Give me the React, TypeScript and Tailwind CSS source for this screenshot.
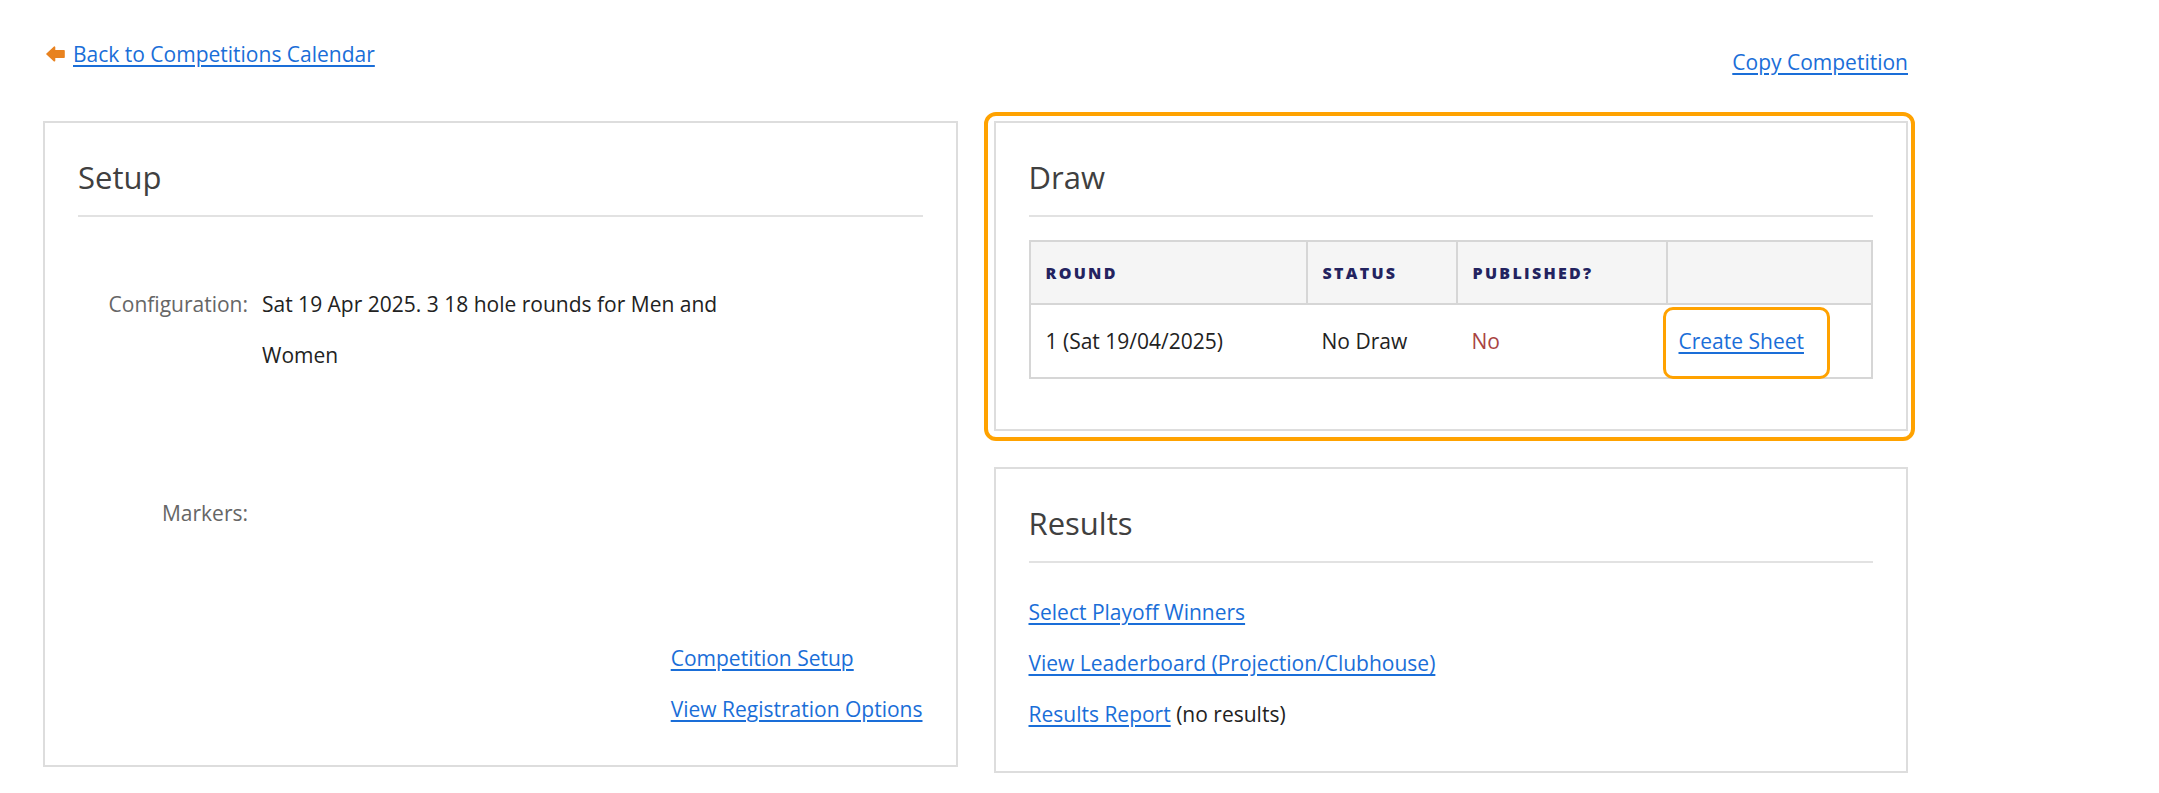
import React from 'react';

const link = 'text-[#1a6ed8] underline underline-offset-[3px] decoration-[1.5px]';

function BackArrow() {
  return (
    <svg width="19" height="16" viewBox="0 0 19 16" className="shrink-0">
      <path
        d="M1 8 L8.5 1.2 L8.5 4.8 L18 4.8 L18 11.2 L8.5 11.2 L8.5 14.8 Z"
        fill="#e8821f"
        stroke="#e8821f"
        strokeWidth="1.6"
        strokeLinejoin="round"
      />
    </svg>
  );
}

function Panel({
  title,
  className = '',
  children,
}: {
  title: string;
  className?: string;
  children: React.ReactNode;
}) {
  return (
    <section className={`border-2 border-[#dddddd] bg-white px-[33px] pt-[37px] ${className}`}>
      <h2 className="text-[31px] leading-[34px] text-[#404040]">{title}</h2>
      <hr className="mt-[21px] border-t-2 border-[#e2e2e2]" />
      {children}
    </section>
  );
}

function SetupPanel() {
  return (
    <Panel title="Setup" className="pb-[30px]">
      <dl className="mt-[62px] grid grid-cols-[170px_480px] gap-x-[14px] text-[21px] leading-[51px]">
        <dt className="text-right text-[#666]">Configuration:</dt>
        <dd className="text-[#222]">Sat 19 Apr 2025. 3 18 hole rounds for Men and Women</dd>
        <dt className="mt-[107px] text-right text-[#666]">Markers:</dt>
        <dd className="mt-[107px] text-[#222]"></dd>
      </dl>
      <div className="mt-[94px] flex justify-end">
        <ul className="text-[21px] leading-[51px]">
          <li>
            <a href="#" className={link}>Competition Setup</a>
          </li>
          <li>
            <a href="#" className={link}>View Registration Options</a>
          </li>
        </ul>
      </div>
    </Panel>
  );
}

function DrawPanel() {
  const th = 'border-2 border-[#d6d6d6] px-[15px] text-left align-middle text-[16px] font-extrabold uppercase tracking-[2.3px] text-[#23235f]';
  const td = 'border-y-2 border-[#d6d6d6] px-[15px] align-middle text-[21px] leading-[51px] text-[#222]';
  return (
    <div className="relative">
      <Panel title="Draw" className="pb-[50px]">
        <table className="mt-[23px] w-full border-collapse border-2 border-[#d6d6d6]">
          <thead>
            <tr className="h-[63px] bg-[#f5f5f5]">
              <th className={`${th} w-[277px]`}>Round</th>
              <th className={`${th} w-[150px]`}>Status</th>
              <th className={`${th} w-[210px]`}>Published?</th>
              <th className={th}></th>
            </tr>
          </thead>
          <tbody>
            <tr className="h-[74px]">
              <td className={td}>1 (Sat 19/04/2025)</td>
              <td className={td}>No Draw</td>
              <td className={`${td} text-[#a94442]`}>No</td>
              <td className={`${td} pl-[12px]`}>
                <span className="relative inline-block">
                  <a href="#" className={link}>Create Sheet</a>
                  <span className="pointer-events-none absolute -bottom-[12px] -left-[16px] -right-[26px] -top-[9px] rounded-[10px] border-[3px] border-[#ffa200]" />
                </span>
              </td>
            </tr>
          </tbody>
        </table>
      </Panel>
      <div className="pointer-events-none absolute -bottom-[10px] -left-[10px] -right-[7px] -top-[9px] rounded-[12px] border-4 border-[#ffa200]" />
    </div>
  );
}

function ResultsPanel() {
  return (
    <Panel title="Results" className="pb-[31px]">
      <ul className="mt-[24px] text-[21px] leading-[51px]">
        <li>
          <a href="#" className={link}>Select Playoff Winners</a>
        </li>
        <li>
          <a href="#" className={link}>View Leaderboard (Projection/Clubhouse)</a>
        </li>
        <li>
          <a href="#" className={link}>Results Report</a>{' '}
          <span className="text-[#222]">(no results)</span>
        </li>
      </ul>
    </Panel>
  );
}

export default function App() {
  return (
    <div className="min-h-screen bg-white font-['Open_Sans',sans-serif]">
      <div className="ml-[43px] w-[1865px] pt-[39px]">
        <div className="flex items-start justify-between">
          <div className="ml-[3px] flex items-center gap-[8px] text-[21px] leading-[30px]">
            <BackArrow />
            <a href="#" className={link}>Back to Competitions Calendar</a>
          </div>
          <a href="#" className={`${link} mt-[8px] text-[21px] leading-[30px]`}>Copy Competition</a>
        </div>
        <div className="mt-[44px] grid grid-cols-2 items-start gap-x-[36px]">
          <SetupPanel />
          <div className="flex flex-col gap-[36px]">
            <DrawPanel />
            <ResultsPanel />
          </div>
        </div>
      </div>
    </div>
  );
}
